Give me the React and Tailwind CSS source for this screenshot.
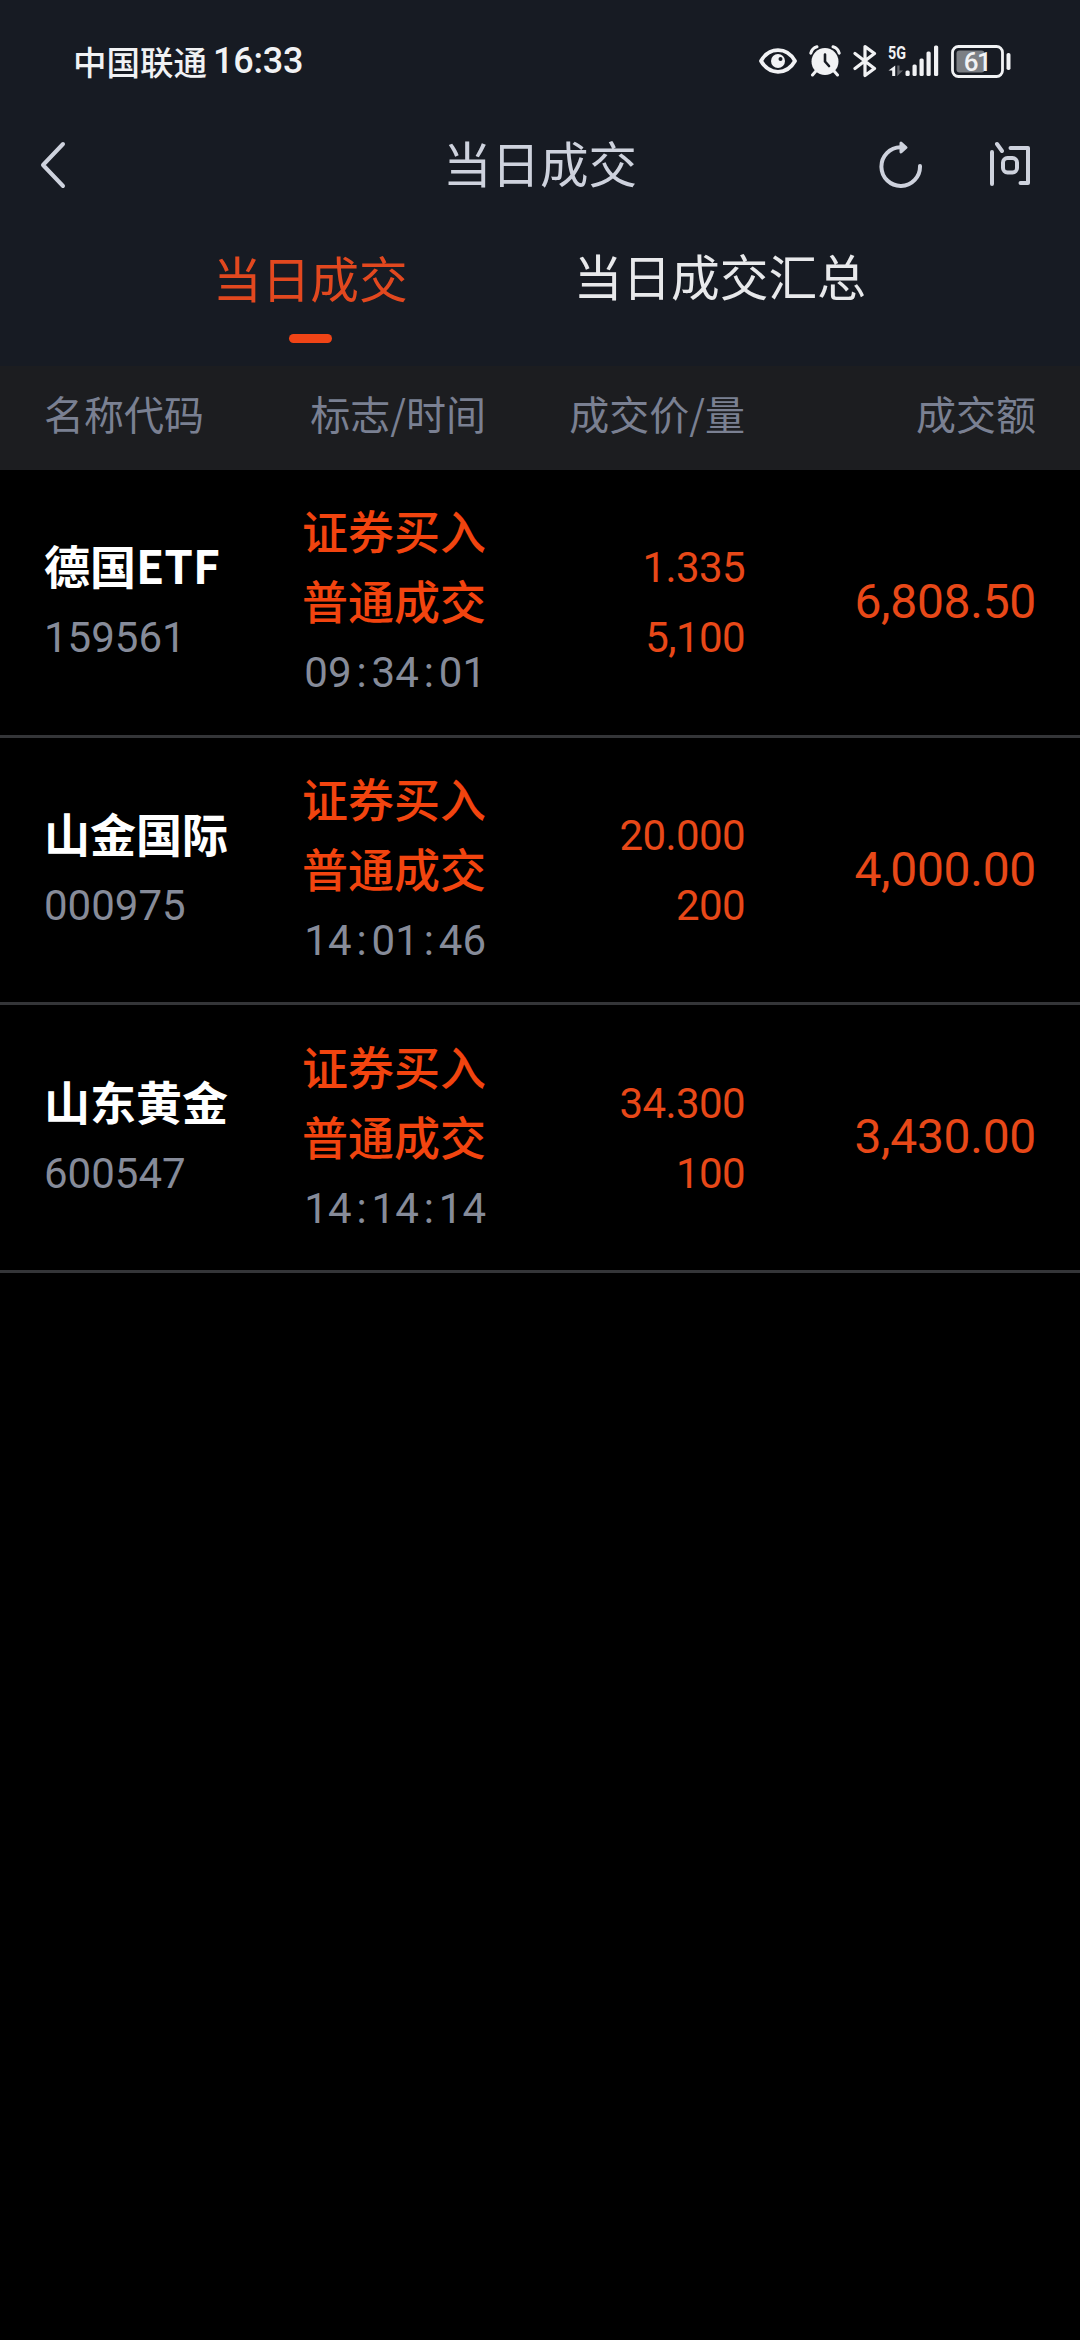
const trades = [
  { name: "德国ETF", code: "159561", side: "证券买入", kind: "普通成交", time: "09:34:01", price: "1.335", volume: "5,100", amount: "6,808.50" },
  { name: "山金国际", code: "000975", side: "证券买入", kind: "普通成交", time: "14:01:46", price: "20.000", volume: "200", amount: "4,000.00" },
  { name: "山东黄金", code: "600547", side: "证券买入", kind: "普通成交", time: "14:14:14", price: "34.300", volume: "100", amount: "3,430.00" },
];

function StatusBar() {
  return (
    <div className="h-[122px] flex items-center justify-between pl-[73px] pr-[69px] text-[#f1f2f4]">
      <div className="flex items-center">
        <span className="text-[33.5px] leading-none font-medium">中国联通</span>
        <span className="ml-[6px] text-[36px] leading-none font-medium tracking-[-0.2px] font-['Roboto']">16:33</span>
      </div>
      <div className="flex items-center">
        {/* Eye comfort */}
        <svg className="w-[38px] h-[26px]" viewBox="0 0 38 26" fill="none">
          <path d="M2 13C6 6 12 2.2 19 2.2S32 6 36 13C32 20 26 23.8 19 23.8S6 20 2 13Z" stroke="currentColor" strokeWidth="3.8" strokeLinejoin="round" />
          <circle cx="19" cy="13" r="7" fill="currentColor" />
          <circle cx="21.5" cy="11" r="2" fill="#171b23" />
        </svg>
        {/* Alarm */}
        <svg className="ml-3 w-8 h-8" viewBox="0 0 32 32" fill="none" stroke="currentColor" strokeLinecap="round">
          <path d="M1.8 8.2C2.6 5 5 2.6 8 1.8M30.2 8.2C29.4 5 27 2.6 24 1.8" strokeWidth="3" />
          <path d="M7 26L3.5 30M25 26L28.5 30" strokeWidth="3" />
          <circle cx="16" cy="16.5" r="13.5" fill="currentColor" stroke="none" />
          <path d="M16 9.5V16.5L20 21" stroke="#171b23" strokeWidth="2.6" strokeLinejoin="round" />
        </svg>
        {/* Bluetooth */}
        <svg className="ml-3 w-6 h-[34px]" viewBox="0 0 24 34" fill="none" stroke="currentColor" strokeWidth="3.2" strokeLinejoin="round" strokeLinecap="round">
          <path d="M2 9.5L21.5 24.5L12 31.5V2.5L21.5 9.5L2 24.5" />
        </svg>
        {/* Mobile signal */}
        <svg className="ml-[11px] w-[51px] h-8 overflow-visible" viewBox="0 0 51 32" fill="currentColor">
          <text x="0" y="14" fontFamily="Roboto" fontSize="18.5" fontWeight="700" textLength="18" lengthAdjust="spacingAndGlyphs">5G</text>
          <path d="M7.2 20.5V31H4.2V25.5H0.5Z" />
          <path d="M9.3 20.5V31L15 25.5H11.5V20.5Z" opacity="0.35" />
          <rect x="17.5" y="25.5" width="4.2" height="5.5" rx="1.5" />
          <rect x="24.5" y="19.5" width="4.2" height="11.5" rx="1.5" />
          <rect x="31.5" y="13.5" width="4.2" height="17.5" rx="1.5" />
          <rect x="38.5" y="6.5" width="4.2" height="24.5" rx="1.5" />
          <rect x="46" y="0.5" width="4.2" height="30.5" rx="1.5" />
        </svg>
        {/* Battery */}
        <svg className="ml-[12px] w-[60px] h-[33px]" viewBox="0 0 60 33">
          <rect x="1.5" y="1.5" width="50" height="30" rx="6" fill="none" stroke="currentColor" strokeWidth="2.8" />
          <rect x="5.5" y="5.5" width="28" height="22" rx="3" fill="#7c7f84" />
          <rect x="55.5" y="8" width="4" height="17" rx="1.8" fill="currentColor" />
          <text x="26" y="25.5" textAnchor="middle" fontFamily="Roboto" fontSize="26" fontWeight="500" letterSpacing="-1.5" fill="currentColor">61</text>
        </svg>
      </div>
    </div>
  );
}

function TitleBar() {
  return (
    <header className="h-[88px] grid grid-cols-3 items-center pl-[40px] pr-[49px] text-[#ced2dd]">
      <button>
        <svg className="w-7 h-[48px] -mt-[2px]" viewBox="0 0 28 48" fill="none" stroke="currentColor" strokeWidth="4" strokeLinecap="round" strokeLinejoin="round">
          <path d="M23 3L3 24L23 45" />
        </svg>
      </button>
      <h1 className="pl-[9px] pb-[7px] text-center text-[48.5px] leading-none">当日成交</h1>
      <div className="flex justify-end items-center gap-[66px]">
        <svg className="w-[44px] h-[48px] -mt-[5px]" viewBox="0 0 44 48" fill="none" stroke="currentColor" strokeWidth="4" strokeLinecap="round">
          <path d="M41 26A19.3 19.3 0 1 1 21.5 7.3" />
          <path d="M22 3L27 7.5L22 12Z" fill="currentColor" strokeWidth="3" strokeLinejoin="round" />
        </svg>
        <svg className="w-[42px] h-[46px] -mt-[4px]" viewBox="0 0 42 46" fill="none" stroke="currentColor" strokeWidth="4" strokeLinecap="round" strokeLinejoin="round">
          <path d="M3 11V43M8 3L13 10M21.5 7H39V42H31.5" />
          <rect x="14" y="17" width="14" height="14.5" rx="4.5" />
        </svg>
      </div>
    </header>
  );
}

function Tabs() {
  return (
    <nav className="h-[156px] flex pt-[37px] pl-[213px] gap-[166px] text-[48.7px] leading-[56px]">
      <button className="flex flex-col items-center self-start pt-[2px] text-[#e2481f]">
        当日成交
        <span className="mt-[29px] w-[43px] h-[9px] rounded-full bg-[#f04416]" />
      </button>
      <button className="self-start text-[#e8e9eb]">当日成交汇总</button>
    </nav>
  );
}

function TradeRow({ trade }) {
  return (
    <li className="h-[267.7px] grid grid-cols-[250px_192px_259px_291px] px-[44px] pt-[2px] items-center border-b-[3px] border-[#343538]">
      <div>
        <div className="text-[46px] leading-[62px] font-bold text-white">{trade.name}</div>
        <div className="mt-2 text-[42px] leading-[70px] font-['Roboto'] text-[#868b99]">{trade.code}</div>
      </div>
      <div className="text-right whitespace-nowrap text-[46px] leading-[70px] font-medium text-[#f2440f]">
        <div className="leading-[62px]">{trade.side}</div>
        <div className="my-1">{trade.kind}</div>
        <div className="flex justify-end text-[42px] font-normal font-['Roboto'] text-[#868b99]">
          {trade.time.split("").map((ch, i) => (
            <span key={i} className={ch === ":" ? "w-5 text-center" : ""}>{ch}</span>
          ))}
        </div>
      </div>
      <div className="text-right text-[42px] leading-[70px] tracking-[-0.6px] font-['Roboto'] text-[#e84818]">
        <div>{trade.price}</div>
        <div>{trade.volume}</div>
      </div>
      <div className="pb-[3px] text-right text-[48px] leading-[70px] tracking-[-0.3px] font-['Roboto'] text-[#e84818]">{trade.amount}</div>
    </li>
  );
}

export default function App() {
  return (
    <main className="w-[1080px] min-h-[2340px] bg-black font-['Noto_Sans_CJK_SC',sans-serif]">
      <div className="bg-[#171b23]">
        <StatusBar />
        <TitleBar />
        <Tabs />
      </div>

      <div className="h-[104px] grid grid-cols-[250px_192px_259px_291px] px-[44px] pb-[11px] items-center bg-[#1c1d20] text-[40px] leading-none text-[#7a8092]">
        <span>名称代码</span>
        <span className="text-right whitespace-nowrap">标志/时间</span>
        <span className="text-right">成交价/量</span>
        <span className="text-right">成交额</span>
      </div>

      <ul>
        {trades.map((trade) => (
          <TradeRow key={trade.code} trade={trade} />
        ))}
      </ul>
    </main>
  );
}
